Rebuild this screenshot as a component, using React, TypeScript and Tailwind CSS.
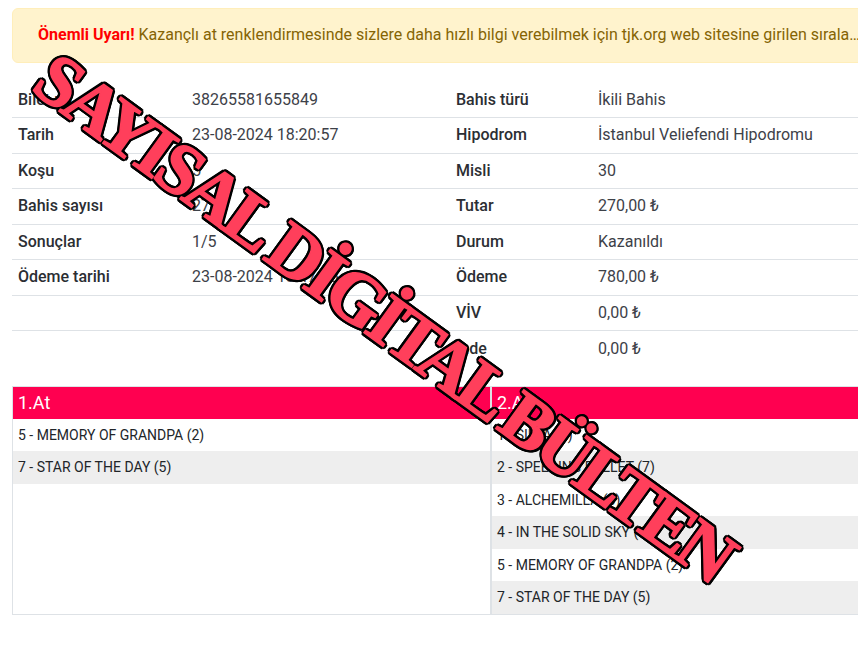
const FONT = "font-['Roboto',sans-serif]";

const details: [string, string, string, string][] = [
  ["Bilet no", "38265581655849", "Bahis türü", "İkili Bahis"],
  ["Tarih", "23-08-2024 18:20:57", "Hipodrom", "İstanbul Veliefendi Hipodromu"],
  ["Koşu", "5", "Misli", "30"],
  ["Bahis sayısı", "27", "Tutar", "270,00 ₺"],
  ["Sonuçlar", "1/5", "Durum", "Kazanıldı"],
  ["Ödeme tarihi", "23-08-2024 18:47:05", "Ödeme", "780,00 ₺"],
  ["", "", "VİV", "0,00 ₺"],
  ["", "", "İade", "0,00 ₺"],
];

const firstHorses = ["5 - MEMORY OF GRANDPA (2)", "7 - STAR OF THE DAY (5)"];
const secondHorses = [
  "1 - SILVA (1)",
  "2 - SPEEDING BULLET (7)",
  "3 - ALCHEMILLA (6)",
  "4 - IN THE SOLID SKY (4)",
  "5 - MEMORY OF GRANDPA (2)",
  "7 - STAR OF THE DAY (5)",
];

const HorseColumn = ({ title, horses, first }: { title: string; horses: string[]; first?: boolean }) => (
  <div className={first ? "w-[479px] shrink-0 border-r-2 border-[#dee2e6]" : "flex-1"}>
    <div className="h-8 pl-[5px] bg-[#ff0050] text-white text-lg leading-8">{title}</div>
    {horses.map((horse, i) => (
      <div
        key={horse}
        className={`h-[32.5px] pl-[5px] text-sm leading-[32px] text-[#212529] ${i % 2 === 1 ? "bg-[#eeeeee]" : ""}`}
      >
        {horse}
      </div>
    ))}
  </div>
);

export default function App() {
  return (
    <div className={`relative w-[858px] h-[653px] overflow-hidden bg-white ${FONT}`}>
      <div className="w-[958px] pl-3 pt-2">
        <div className="w-[870px] h-[55px] pl-[25px] pr-[20px] bg-[#fff3cd] border border-[#ffeeba] rounded-md text-base leading-[51px] text-[#856404] truncate">
          <strong className="text-[#ff0000] font-bold">Önemli Uyarı!</strong> Kazançlı at renklendirmesinde sizlere daha hızlı bilgi verebilmek için tjk.org web sitesine girilen sıralamaya göre bilgi verilmektedir.
        </div>

        <div className="mt-[19.6px] text-base text-[#3d4148]">
          {details.map(([label, value, label2, value2], i) => (
            <div
              key={label2}
              className={`grid grid-cols-[174px_264px_142px_1fr] h-[35.5px] items-center px-1.5 ${i < details.length - 1 ? "border-b border-[#dee2e6]" : ""}`}
            >
              <span className="font-medium text-[#2b2e33]">{label}</span>
              <span>{value}</span>
              <span className="font-medium text-[#2b2e33]">{label2}</span>
              <span>{value2}</span>
            </div>
          ))}
        </div>

        <div className="flex mt-[19.4px] h-[229px] border border-[#dee2e6]">
          <HorseColumn title="1.At" horses={firstHorses} first />
          <HorseColumn title="2.At" horses={secondHorses} />
        </div>
      </div>

      {/* watermark over the ticket */}
      <div className="absolute left-[384px] top-[317px] -translate-x-1/2 -translate-y-1/2 rotate-[36deg] whitespace-nowrap font-['Liberation_Serif',serif] font-bold text-[73px] tracking-[-4.6px] leading-none text-[#ff3f5b] [-webkit-text-stroke:1.5px_#ff3f5b] [text-shadow:3px_0_0_#000,-3px_0_0_#000,0_3px_0_#000,0_-3px_0_#000,2px_2px_0_#000,-2px_2px_0_#000,2px_-2px_0_#000,-2px_-2px_0_#000,3px_1px_0_#000,-3px_1px_0_#000,3px_-1px_0_#000,-3px_-1px_0_#000,1px_3px_0_#000,-1px_3px_0_#000,1px_-3px_0_#000,-1px_-3px_0_#000]">
        SAYISAL DİGİTAL BÜLTEN
      </div>
    </div>
  );
}
